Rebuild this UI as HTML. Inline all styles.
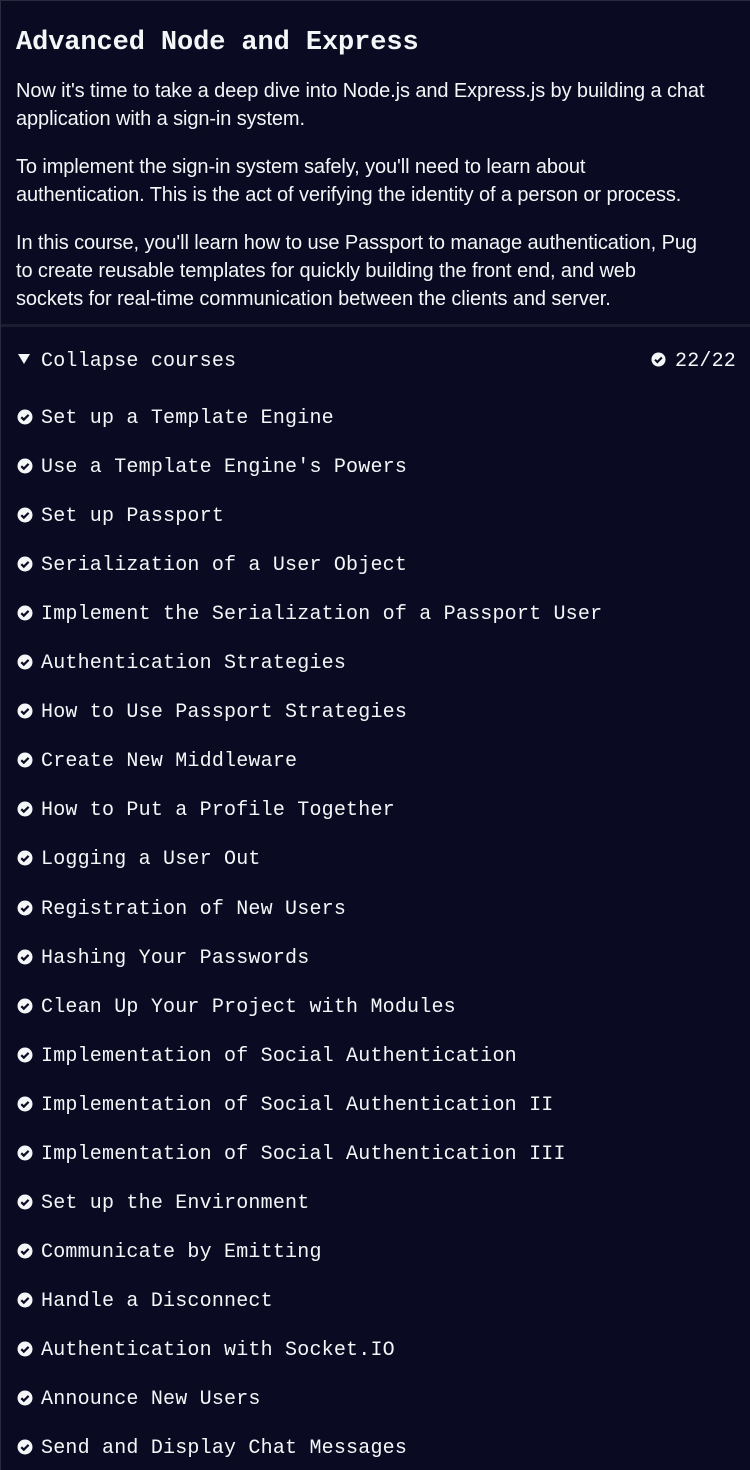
<!DOCTYPE html>
<html><head><meta charset="utf-8"><style>
html,body{margin:0;padding:0;background:#0a0a23;}
body{width:750px;height:1470px;overflow:hidden;position:relative;color:#f5f6f7;box-sizing:border-box;border-left:1px solid #2a2a40;border-top:1px solid #2a2a40;}
h1{position:absolute;left:15px;top:24px;margin:0;font:bold 27px/36px "Liberation Mono",monospace;letter-spacing:-0.1px;}
.p{position:absolute;left:15px;width:735px;margin:0;font:20px/28px "Liberation Sans",sans-serif;letter-spacing:-0.1px;white-space:nowrap;}
.sep{position:absolute;left:0;top:323px;width:750px;height:3px;background:#1b1b32;}
.row{position:absolute;left:16px;height:30px;font:20px/30px "Liberation Mono",monospace;letter-spacing:0.2px;white-space:nowrap;}
.row svg{position:absolute;left:0;top:5px;}
.row span{position:absolute;left:24px;}
</style></head><body>
<h1>Advanced Node and Express</h1>
<p class="p" style="top:76px">Now it's time to take a deep dive into Node.js and Express.js by building a chat<br>application with a sign-in system.</p>
<p class="p" style="top:152px">To implement the sign-in system safely, you'll need to learn about<br>authentication. This is the act of verifying the identity of a person or process.</p>
<p class="p" style="top:228px">In this course, you'll learn how to use Passport to manage authentication, Pug<br>to create reusable templates for quickly building the front end, and web<br>sockets for real-time communication between the clients and server.</p>
<div class="sep"></div>
<div class="row" style="top:346px"><svg width="14" height="14" viewBox="0 0 14 14" style="top:5px"><path d="M1 2h12L7 12z" fill="#f5f6f7"/></svg><span>Collapse courses</span></div>
<div class="row" style="top:346px;left:650px"><svg width="15" height="15" viewBox="0 0 16 16"><circle cx="8" cy="8" r="7.5" fill="#f5f6f7"/><path d="M4.3 8.2l2.5 2.5 4.8-4.8" stroke="#0a0a23" stroke-width="2.2" fill="none"/></svg><span>22/22</span></div>
<div id="list"></div>
<script>
var items=["Set up a Template Engine","Use a Template Engine's Powers","Set up Passport","Serialization of a User Object","Implement the Serialization of a Passport User","Authentication Strategies","How to Use Passport Strategies","Create New Middleware","How to Put a Profile Together","Logging a User Out","Registration of New Users","Hashing Your Passwords","Clean Up Your Project with Modules","Implementation of Social Authentication","Implementation of Social Authentication II","Implementation of Social Authentication III","Set up the Environment","Communicate by Emitting","Handle a Disconnect","Authentication with Socket.IO","Announce New Users","Send and Display Chat Messages"];
var h="";items.forEach(function(t,i){var top=Math.round(403+i*49.05);h+='<div class="row" style="top:'+top+'px"><svg width="16" height="16" viewBox="0 0 16 16"><circle cx="8" cy="8" r="7.5" fill="#f5f6f7"/><path d="M4.3 8.2l2.5 2.5 4.8-4.8" stroke="#0a0a23" stroke-width="2.2" fill="none"/></svg><span>'+t.replace(/'/g,"&#39;")+'</span></div>';});
document.getElementById("list").innerHTML=h;
</script>
</body></html>
